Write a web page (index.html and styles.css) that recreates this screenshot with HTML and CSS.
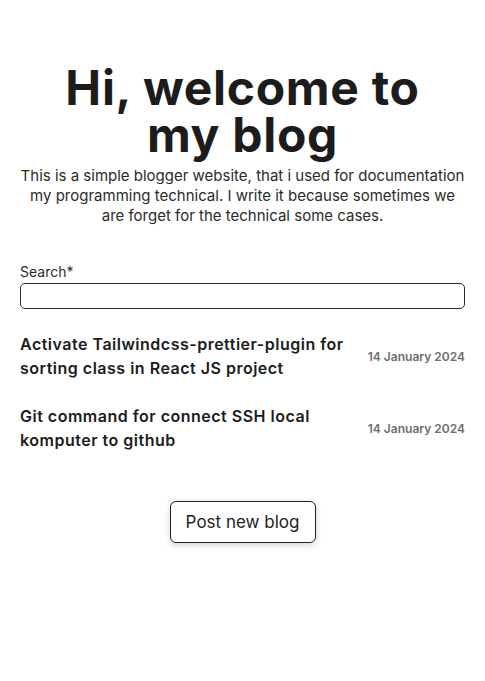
FILE: index.html
```html
<!DOCTYPE html>
<html lang="en">
<head>
<meta charset="utf-8">
<title>Blog</title>
<link rel="stylesheet" href="styles.css">
</head>
<body>
<main class="page">
  <header class="hero">
    <h1 class="hero-title">Hi, welcome to my blog</h1>
    <p class="hero-text">This is a simple blogger website, that i used for documentation my programming technical. I write it because sometimes we are forget for the technical some cases.</p>
  </header>
  <div class="search">
    <label class="search-label" for="q">Search*</label>
    <input class="search-input" id="q" type="text">
  </div>
  <ul class="posts">
    <li class="post">
      <a class="post-title" href="#">Activate Tailwindcss-prettier-plugin for sorting class in React JS project</a>
      <span class="post-date">14 January 2024</span>
    </li>
    <li class="post">
      <a class="post-title" href="#">Git command for connect SSH local komputer to github</a>
      <span class="post-date">14 January 2024</span>
    </li>
  </ul>
  <div class="actions">
    <button class="btn" type="button">Post new blog</button>
  </div>
</main>
</body>
</html>
```
FILE: styles.css
```css
* { box-sizing: border-box; }
html, body { margin: 0; background: #fff; }
body {
  font-family: "Inter", "Open Sans", sans-serif;
  color: #222;
}
.page {
  padding: 64px 20px 40px;
}
.hero { text-align: center; }
.hero-title {
  margin: 0 auto;
  max-width: 400px;
  font-size: 48px;
  line-height: 47px;
  font-weight: 700;
  letter-spacing: 0.7px;
  color: #1c1c1c;
}
.hero-text {
  margin: 8px 0 0;
  font-size: 15px;
  line-height: 20px;
  color: #2b2b2b;
}
.search { margin-top: 36px; display: flex; flex-direction: column; gap: 1px; }
.search-label { font-size: 14px; line-height: 20px; color: #2b2b2b; }
.search-input {
  height: 26px;
  width: 100%;
  border: 1px solid #2a2a2a;
  border-radius: 5px;
  font: inherit;
}
.posts {
  list-style: none;
  margin: 23px 0 0;
  padding: 0;
  display: flex;
  flex-direction: column;
  gap: 24px;
}
.post {
  display: flex;
  align-items: center;
  justify-content: space-between;
  gap: 16px;
}
.post-title {
  max-width: 330px;
  font-size: 16px;
  line-height: 24px;
  font-weight: 600;
  letter-spacing: 0.5px;
  color: #1c1c1c;
  text-decoration: none;
}
.post-date {
  font-size: 12px;
  font-weight: 600;
  color: #6e6e6e;
  white-space: nowrap;
}
.actions {
  margin-top: 49px;
  display: flex;
  justify-content: center;
}
.btn {
  width: 146px;
  height: 42px;
  background: #fff;
  border: 1px solid #222;
  border-radius: 6px;
  box-shadow: 0 2px 6px rgba(0,0,0,0.18);
  font: inherit;
  font-size: 17px;
  color: #222;
}
```
